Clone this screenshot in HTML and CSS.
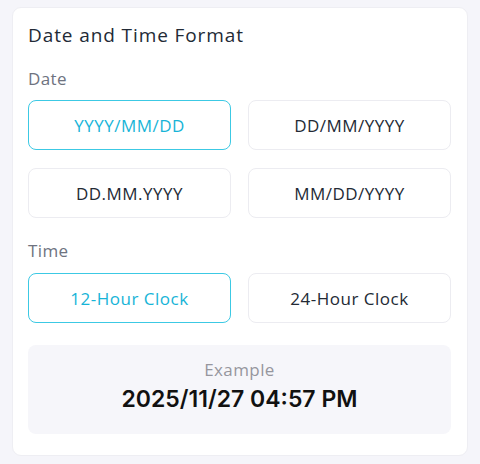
FILE: index.html
```html
<!DOCTYPE html>
<html>
<head>
<meta charset="utf-8">
<link rel="stylesheet" href="styles.css">
</head>
<body>
<div class="card">
  <h2 class="title">Date and Time Format</h2>
  <div class="label">Date</div>
  <div class="grid">
    <button class="opt selected">YYYY/MM/DD</button>
    <button class="opt">DD/MM/YYYY</button>
    <button class="opt">DD.MM.YYYY</button>
    <button class="opt">MM/DD/YYYY</button>
  </div>
  <div class="label time-label">Time</div>
  <div class="grid">
    <button class="opt selected">12-Hour Clock</button>
    <button class="opt">24-Hour Clock</button>
  </div>
  <div class="example">
    <div class="ex-label">Example</div>
    <div class="ex-value">2025/11/27 04:57 PM</div>
  </div>
</div>
</body>
</html>
```
FILE: styles.css
```css
* { box-sizing: border-box; }
html, body { margin: 0; padding: 0; }
body {
  background: #f5f5fa;
  width: 480px;
  height: 464px;
  padding: 7px 12px 0 12px;
  font-family: "Open Sans", "Liberation Sans", sans-serif;
}
.card {
  background: #ffffff;
  border: 1px solid #eeeef3;
  border-radius: 9px;
  padding: 14px 16px 21px 15px;
  width: 456px;
}
.title {
  margin: 0;
  font-size: 19px;
  font-weight: 400;
  letter-spacing: 0.9px;
  color: #222a36;
  line-height: 26px;
}
.label {
  margin-top: 20px;
  font-size: 17px;
  letter-spacing: 0.4px;
  color: #6e7380;
  line-height: 22px;
}
.time-label { margin-top: 22px; }
.grid {
  margin-top: 10px;
  display: grid;
  grid-template-columns: 1fr 1fr;
  column-gap: 17px;
  row-gap: 18px;
}
.time-label + .grid { margin-top: 11px; }
.opt {
  height: 50px;
  background: #ffffff;
  border: 1px solid #ececf1;
  border-radius: 8px;
  font-family: "Open Sans", "Liberation Sans", sans-serif;
  font-size: 17px;
  letter-spacing: 0.5px;
  color: #232a35;
  padding: 0;
}
.opt.selected {
  border-color: #3cc9e4;
  color: #17b4d7;
  font-weight: 500;
}
.example {
  margin-top: 22px;
  background: #f6f6fa;
  border-radius: 8px;
  height: 89px;
  display: flex;
  flex-direction: column;
  align-items: center;
  padding-top: 14px;
}
.ex-label {
  font-size: 17px;
  letter-spacing: 0.4px;
  color: #96969e;
  line-height: 22px;
}
.ex-value {
  margin-top: 4px;
  font-family: "Inter", "Liberation Sans", sans-serif;
  font-weight: 600;
  font-size: 23px;
  color: #111111;
  line-height: 28px;
}
```
